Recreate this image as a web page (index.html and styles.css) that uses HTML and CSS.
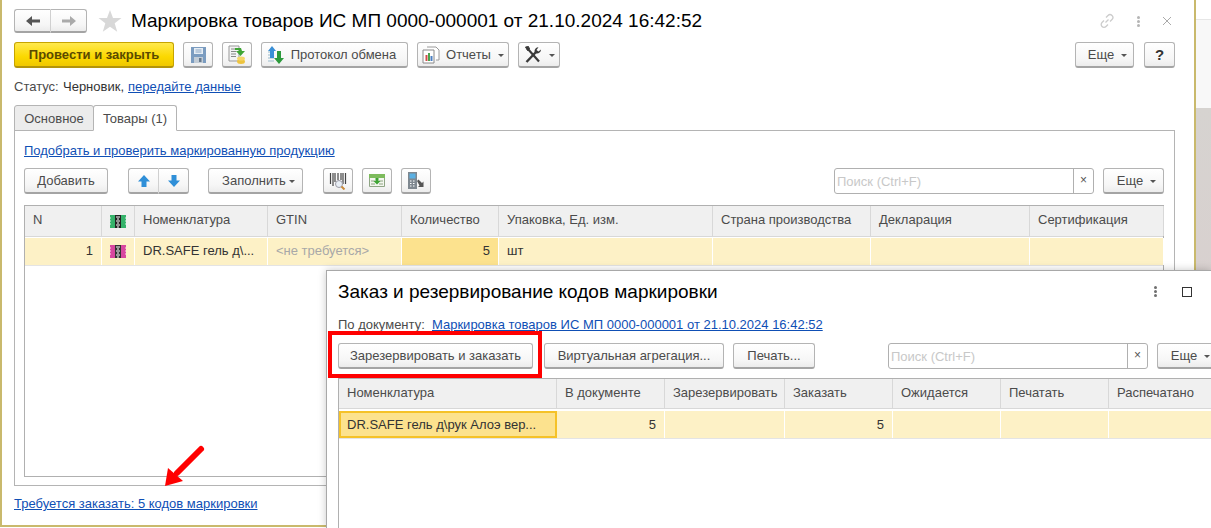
FILE: index.html
```html
<!DOCTYPE html>
<html lang="ru">
<head>
<meta charset="UTF-8">
<title>Маркировка товаров</title>
<link rel="stylesheet" href="styles.css">
</head>
<body>

<div class="backdrop">
<div class="backdropTop"></div>
<div class="backdropGrey"></div>
</div>

<main class="docWindow">

<header class="titleRow">
<div class="btnGroup navGroup">
<button class="btn navBtn"><svg width="16" height="12" viewBox="0 0 16 12"><path d="M1 6l6-5v3.500h8v3H7V11z" fill="#555"/></svg></button>
<button class="btn navBtn"><svg width="16" height="12" viewBox="0 0 16 12"><path d="M15 6L9 1v3.500H1v3h8V11z" fill="#aaa"/></svg></button>
</div>
<svg class="star" width="24" height="24" viewBox="0 0 24 24"><path d="M12 1l3 8h8.500l-6.800 5.300 2.500 8.500L12 17.800 4.800 22.800l2.500-8.500L.5 9H9z" fill="#d8d8d8"/></svg>
<h1 class="docTitle">Маркировка товаров ИС МП 0000-000001 от 21.10.2024 16:42:52</h1>
<div class="winIcons">
<svg width="16" height="16" viewBox="0 0 16 16" fill="none" stroke="#ccc" stroke-width="1.300"><path d="M6.500 9.500l3-3M7 4.500l2-2a2.800 2.800 0 0 1 4 4l-2 2M9 11.500l-2 2a2.800 2.800 0 0 1-4-4l2-2"/></svg>
<span class="dots dotsPale"><i></i><i></i><i></i></span>
<svg width="10" height="10" viewBox="0 0 10 10" stroke="#aaa" stroke-width="1"><path d="M1 1l8 8M9 1l-8 8"/></svg>
</div>
</header>

<div class="toolbar mainBar">
<button class="btn yellowBtn">Провести и закрыть</button>
<button class="btn iconBtn saveBtn"><svg width="15" height="16" viewBox="0 0 15 16"><path d="M0 0h15v16H0z" fill="#7b9cc0"/><path d="M3 1h9v6H3z" fill="#e6edf4"/><path d="M4.500 3h6M4.500 5h6" stroke="#8aa6c4"/><path d="M3 10h9v6H3z" fill="#c2ccd6"/><path d="M8 11h2.500v4H8z" fill="#67798c"/></svg></button>
<button class="btn iconBtn postBtn"><svg width="20" height="20" viewBox="0 0 20 20"><path d="M2 1h10v15H2z" fill="#f4f4f4" stroke="#999"/><path d="M4 4h5M4 6.500h5M4 9h5M4 11.500h5" stroke="#888"/><ellipse cx="14" cy="16.500" rx="4" ry="2.500" fill="#edc33e"/><ellipse cx="14" cy="13.500" rx="4" ry="2" fill="#f3d668"/><path d="M8 3h6l1 3h3l-4.500 5L9 6h3l-.5-1H8z" fill="#3fa535"/></svg></button>
<button class="btn textIconBtn protocolBtn"><svg width="18" height="18" viewBox="0 0 18 18"><path d="M1 6h6M1 9h6M1 12h6M1 15h6" stroke="#9bc"/><path d="M5 0l4 5H7v7H3V5H1z" fill="#3a8fd6"/><path d="M12 18l5-6h-3V5h-4v7H7z" fill="#2c9a3c"/></svg>Протокол обмена</button>
<button class="btn textIconBtn reportsBtn"><svg width="18" height="18" viewBox="0 0 18 18"><path d="M5 1h9l3 3v10h-3" fill="#fff" stroke="#9a9a9a"/><path d="M1 4h11v13H1z" fill="#fff" stroke="#8a8a8a"/><path d="M3.500 9h2v6h-2z" fill="#d24b4b"/><path d="M6 7h2v8H6z" fill="#4ba34b"/><path d="M8.500 10h2v5h-2z" fill="#4b7fc2"/></svg>Отчеты<i class="caret"></i></button>
<button class="btn textIconBtn toolsBtn"><svg width="18" height="18" viewBox="0 0 18 18" fill="none" stroke="#3a3a3a"><path d="M3.500 2.500L15 15.500" stroke-width="2.200"/><path d="M1.500 1l3-.5 1 2.500-2 1.500z" fill="#3a3a3a"/><path d="M2.500 16L12 6" stroke-width="2.400"/><path d="M17 3.500l-2.500 2-2-1.500 2-2.800A4 4 0 0 0 10.500 5.500l1.800 2A4 4 0 0 0 17 3.500z" fill="#3a3a3a" stroke="none"/></svg><i class="caret"></i></button>
<div class="spacer"></div>
<button class="btn moreBtn">Еще<i class="caret"></i></button>
<button class="btn helpBtn">?</button>
</div>

<div class="statusRow">
<span class="statusLabel">Статус:</span>
<span class="statusValue">Черновик,</span>
<a class="link">передайте данные</a>
</div>

<div class="tabs">
<div class="tab">Основное</div>
<div class="tab tabActive">Товары (1)</div>
</div>

<section class="tabPanel">
<a class="link pickLink">Подобрать и проверить маркированную продукцию</a>

<div class="toolbar goodsBar">
<button class="btn addBtn">Добавить</button>
<div class="btnGroup moveGroup">
<button class="btn moveBtn"><svg width="14" height="14" viewBox="0 0 14 14"><path d="M7 1l6 6.500H9.500V13h-5V7.500H1z" fill="#2f8fd8"/></svg></button>
<button class="btn moveBtn"><svg width="14" height="14" viewBox="0 0 14 14"><path d="M7 13l6-6.500H9.500V1h-5v5.500H1z" fill="#2f8fd8"/></svg></button>
</div>
<button class="btn fillBtn">Заполнить<i class="caret"></i></button>
<button class="btn iconBtn barBtn"><svg width="18" height="18" viewBox="0 0 18 18"><path d="M1.500 1v11M4 1v13M6 1v9M9 1v7M12 1v7M14 1v11M16.500 1v11" stroke="#444" stroke-width="1.200"/><circle cx="10" cy="12" r="3.500" fill="#e8eef5" stroke="#9a9aa5"/><path d="M12.500 14.500l3 3" stroke="#c98a3a" stroke-width="2"/></svg></button>
<button class="btn iconBtn loadBtn"><svg width="16" height="13" viewBox="0 0 16 13"><path d="M.5.500h15v12H.5z" fill="#f3f6ee" stroke="#8fa585"/><path d="M0 0h16v4H0z" fill="#7dbb5c"/><path d="M2 7h4M2 10h4M10 7h4M10 10h4" stroke="#8fa585"/><path d="M6.500 4h3v3h2L8 10.500 4.500 7h2z" fill="#3fa535"/></svg></button>
<button class="btn iconBtn scanBtn"><svg width="18" height="20" viewBox="0 0 18 20"><path d="M1 1h9v17H1z" fill="#7f8890"/><path d="M2.500 2.500h6v5h-6z" fill="#5ab0e3"/><path d="M3 10h1.500M6 10h1.500M3 12.500h1.500M6 12.500h1.500M3 15h1.500M6 15h1.500" stroke="#fff"/><path d="M10 10l1.500-1.500 3.500 3.500 1.500-1.500V16h-5.500l1.500-1.500z" fill="#555"/></svg></button>
<div class="spacer"></div>
<div class="searchBox goodsSearch"><span class="searchText">Поиск (Ctrl+F)</span><span class="searchClear">×</span></div>
<button class="btn moreBtn goodsMore">Еще<i class="caret"></i></button>
</div>

<div class="gridTable goodsTable">
<div class="gridRow headRow">
<div class="cell" style="width:77px">N</div>
<div class="cell iconCell" style="width:33px"><svg class="mark" width="16" height="13" viewBox="0 0 16 13"><rect width="16" height="13" fill="#35b26a"/><rect x="5" width="6" height="13" fill="#222"/><path d="M6 2h4M6 6h4M6 10h4M7 4h2M7 8h2M7 12h2" stroke="#fff"/><path d="M0 3h1M0 6h1M0 9h1M15 3h1M15 6h1M15 9h1" stroke="#d8f0e0"/></svg></div>
<div class="cell" style="width:133px">Номенклатура</div>
<div class="cell" style="width:134px">GTIN</div>
<div class="cell" style="width:97px">Количество</div>
<div class="cell" style="width:214px">Упаковка, Ед. изм.</div>
<div class="cell" style="width:158px">Страна производства</div>
<div class="cell" style="width:159px">Декларация</div>
<div class="cell" style="width:134px">Сертификация</div>
</div>
<div class="gridRow bodyRow">
<div class="cell numCell" style="width:77px">1</div>
<div class="cell iconCell" style="width:33px"><svg class="mark" width="16" height="13" viewBox="0 0 16 13"><rect width="16" height="13" fill="#d8479f"/><rect x="5" width="6" height="13" fill="#333"/><path d="M6 2h4M6 6h4M6 10h4M7 4h2M7 8h2M7 12h2" stroke="#fff"/><path d="M0 3h1M0 6h1M0 9h1M15 3h1M15 6h1M15 9h1" stroke="#fbdcef"/></svg></div>
<div class="cell" style="width:133px">DR.SAFE гель д\...</div>
<div class="cell paleText" style="width:134px">&lt;не требуется&gt;</div>
<div class="cell numCell activeCell" style="width:97px">5</div>
<div class="cell" style="width:214px">шт</div>
<div class="cell" style="width:158px"></div>
<div class="cell" style="width:159px"></div>
<div class="cell" style="width:134px"></div>
</div>
</div>
</section>

<a class="link needLink">Требуется заказать: 5 кодов маркировки</a>
</main>

<section class="orderDialog">
<header class="dialogHead">
<h2 class="dialogTitle">Заказ и резервирование кодов маркировки</h2>
<span class="dots"><i></i><i></i><i></i></span>
<span class="maxIcon"></span>
</header>
<div class="byDoc"><span class="statusLabel">По документу:</span><a class="link">Маркировка товаров ИС МП 0000-000001 от 21.10.2024 16:42:52</a></div>
<div class="toolbar dialogBar">
<button class="btn reserveBtn">Зарезервировать и заказать</button>
<button class="btn aggBtn">Виртуальная агрегация...</button>
<button class="btn printBtn">Печать...</button>
<div class="searchBox dialogSearch"><span class="searchText">Поиск (Ctrl+F)</span><span class="searchClear">×</span></div>
<button class="btn dialogMore">Еще<i class="caret"></i></button>
</div>
<div class="gridTable orderTable">
<div class="gridRow headRow orderHead">
<div class="cell" style="width:218px">Номенклатура</div>
<div class="cell" style="width:108px">В документе</div>
<div class="cell" style="width:120px">Зарезервировать</div>
<div class="cell" style="width:108px">Заказать</div>
<div class="cell" style="width:108px">Ожидается</div>
<div class="cell" style="width:108px">Печатать</div>
<div class="cell" style="width:103px">Распечатано</div>
</div>
<div class="gridRow bodyRow orderRow">
<div class="cell selCell" style="width:218px">DR.SAFE гель д\рук Алоэ вер...</div>
<div class="cell numCell" style="width:108px">5</div>
<div class="cell" style="width:120px"></div>
<div class="cell numCell" style="width:108px">5</div>
<div class="cell" style="width:108px"></div>
<div class="cell" style="width:108px"></div>
<div class="cell" style="width:103px"></div>
</div>
</div>
</section>

<div class="redFrame"></div>
<svg class="redArrow" width="48" height="50" viewBox="0 0 48 50"><path d="M39 8L15 32" stroke="#f00" stroke-width="6" stroke-linecap="round"/><path d="M3 45L6 27 21 40z" fill="#f00"/></svg>

</body>
</html>
```

FILE: styles.css
```css
*,*:before,*:after{
margin: 0;
padding: 0;
box-sizing: border-box;
}

html,body{
height: 100%;
}

body{
position: relative;
width: 1211px;
height: 528px;
overflow: hidden;
background: #fff;
font-family: "Liberation Sans", Arial, sans-serif;
font-size: 13px;
color: #4b4b4b;
}

.backdrop{
position: absolute;
left: 1196px;
top: 0;
width: 15px;
height: 100%;
}

.backdropTop{
height: 108px;
background: linear-gradient(#fff 19px, #e6e6e6 19px, #e6e6e6 20px, #f8f8f8 20px);
}

.backdropGrey{
height: 420px;
background: linear-gradient(#d6d3d0, #d9d0cf 50%, #d4d0cd);
}

.docWindow{
position: relative;
display: flex;
flex-direction: column;
width: 1196px;
height: 527px;
padding: 9px 19px 0 12px;
background: #fff;
border-left: 2px solid #c9b96c;
border-right: 2px solid #c9b96c;
border-bottom: 2px solid #c9b96c;
}

.titleRow{
display: flex;
align-items: center;
height: 24px;
}

.navGroup{
width: 73px;
height: 24px;
}

.star{
margin-left: 11px;
}

.docTitle{
margin-left: 9px;
font-size: 19px;
font-weight: normal;
color: #000;
white-space: nowrap;
}

.winIcons{
display: flex;
align-items: center;
gap: 22px;
margin-left: auto;
margin-right: 3px;
}

.dots{
display: inline-flex;
flex-direction: column;
gap: 1px;
}

.dots i{
width: 3px;
height: 3px;
border-radius: 50%;
background: #6f6f6f;
}

.dotsPale i{
background: #b5b5b5;
}

.toolbar{
display: flex;
align-items: center;
}

.spacer{
flex: 1;
}

.btn{
flex: none;
display: flex;
align-items: center;
justify-content: center;
height: 26px;
background: linear-gradient(#fff, #f6f6f6 70%, #ececec);
border: 1px solid #b4b4b4;
border-bottom: 2px solid #a4a4a4;
border-radius: 3px;
font-family: inherit;
font-size: 13px;
color: #4b4b4b;
white-space: nowrap;
}

.btnGroup{
display: flex;
}

.btnGroup .btn{
flex: 1;
height: auto;
}

.btnGroup .btn:first-child{
border-radius: 3px 0 0 3px;
border-right: 1px solid #d0d0d0;
}

.btnGroup .btn:last-child{
border-radius: 0 3px 3px 0;
border-left: none;
}

.caret{
display: inline-block;
width: 0;
height: 0;
margin-left: 7px;
margin-top: 2px;
border: 3px solid transparent;
border-top: 3px solid #555;
border-bottom: none;
}

.mainBar{
margin-top: 9px;
height: 26px;
}

.yellowBtn{
width: 160px;
background: linear-gradient(#ffe94d, #fbd800 60%, #f0c800);
border-color: #c6a400;
border-bottom-color: #b3940a;
font-weight: bold;
color: #5a4a00;
}

.iconBtn{
width: 30px;
}

.saveBtn{
margin-left: 9px;
}

.postBtn{
margin-left: 9px;
}

.textIconBtn svg{
margin-right: 6px;
}

.protocolBtn{
width: 147px;
margin-left: 9px;
padding-right: 6px;
}

.reportsBtn{
width: 92px;
margin-left: 9px;
}

.toolsBtn{
width: 42px;
margin-left: 9px;
}

.toolsBtn svg{
margin-right: 0;
}

.moreBtn{
width: 59px;
padding-left: 6px;
}

.helpBtn{
width: 31px;
margin-left: 10px;
font-size: 15px;
font-weight: bold;
color: #333;
}

.statusRow{
display: flex;
margin-top: 12px;
height: 14px;
line-height: 14px;
white-space: nowrap;
}

.statusLabel{
width: 49px;
}

.statusValue{
width: 65px;
color: #333;
}

.link{
color: #0f4fb5;
text-decoration: underline;
white-space: nowrap;
}

.tabs{
display: flex;
margin-top: 11px;
height: 26px;
}

.tab{
width: 80px;
height: 26px;
line-height: 25px;
text-align: center;
background: #ececec;
border: 1px solid #b4b4b4;
border-radius: 3px 3px 0 0;
}

.tabActive{
position: relative;
width: 84px;
margin-left: -1px;
background: #fff;
border-bottom: 1px solid #fff;
z-index: 1;
}

.tabPanel{
display: flex;
flex-direction: column;
height: 356px;
margin-top: -1px;
padding: 13px 10px 0 9px;
border: 1px solid #b4b4b4;
}

.pickLink{
line-height: 14px;
}

.goodsBar{
margin-top: 10px;
height: 26px;
}

.addBtn{
width: 84px;
}

.moveGroup{
width: 61px;
height: 26px;
margin-left: 20px;
}

.fillBtn{
width: 95px;
margin-left: 19px;
padding-left: 6px;
}

.fillBtn .caret{
margin-left: 3px;
}

.barBtn{
margin-left: 20px;
}

.loadBtn,.scanBtn{
margin-left: 9px;
}

.searchBox{
flex: none;
display: flex;
align-items: center;
height: 26px;
background: #fff;
border: 1px solid #b0b0b0;
border-radius: 3px;
}

.searchText{
flex: 1;
padding-left: 2px;
color: #c8c8c8;
}

.searchClear{
width: 20px;
height: 100%;
line-height: 22px;
text-align: center;
border-left: 1px solid #b0b0b0;
font-size: 12px;
color: #555;
}

.goodsSearch{
width: 260px;
}

.goodsMore{
width: 61px;
margin-left: 9px;
}

.gridTable{
border: 1px solid #b0b0b0;
}

.goodsTable{
height: 272px;
margin-top: 11px;
}

.gridRow{
display: flex;
}

.cell{
flex: none;
padding: 0 8px;
overflow: hidden;
white-space: nowrap;
border-right: 1px solid #fff;
}

.headRow{
height: 31px;
line-height: 28px;
background: #f0f0f0;
border-bottom: 1px solid #d8d8d8;
}

.headRow .cell{
border-right: 1px solid #d8d8d8;
}

.bodyRow{
height: 28px;
line-height: 25px;
margin-top: 1px;
background: #fdf1c6;
border-bottom: 1px solid #e4e4e4;
color: #333;
}

.iconCell{
display: flex;
align-items: center;
justify-content: center;
padding: 0;
}

.numCell{
text-align: right;
}

.paleText{
color: #a8a8a8;
}

.activeCell{
background: #fce28e;
}

.needLink{
margin-top: 11px;
line-height: 14px;
}

.orderDialog{
position: absolute;
left: 326px;
top: 270px;
display: flex;
flex-direction: column;
width: 885px;
height: 258px;
overflow: hidden;
background: #fff;
border-top: 1px solid #a8a8a8;
border-left: 1px solid #a8a8a8;
box-shadow: 0 0 8px rgba(0,0,0,.22);
}

.dialogHead{
flex: none;
display: flex;
align-items: center;
height: 41px;
padding-left: 11px;
}

.dialogTitle{
width: 816px;
font-size: 19px;
font-weight: normal;
color: #000;
white-space: nowrap;
}

.maxIcon{
width: 10px;
height: 10px;
margin-left: 25px;
border: 1px solid #333;
}

.byDoc{
flex: none;
display: flex;
padding-left: 11px;
margin-top: 6px;
line-height: 14px;
white-space: nowrap;
}

.byDoc .statusLabel{
width: 94px;
}

.dialogBar{
flex: none;
margin-top: 11px;
padding-left: 11px;
height: 26px;
}

.reserveBtn{
width: 195px;
}

.aggBtn{
width: 180px;
margin-left: 11px;
}

.printBtn{
width: 82px;
margin-left: 9px;
}

.dialogSearch{
width: 260px;
margin-left: 73px;
}

.dialogMore{
width: 61px;
margin-left: 9px;
padding-left: 6px;
}

.orderTable{
flex: 1;
margin: 9px 0 0 11px;
border-right: none;
border-bottom: none;
overflow: hidden;
}

.orderHead{
height: 30px;
}

.orderRow{
height: 28px;
line-height: 27px;
margin-top: 2px;
}

.selCell{
background: #fce28e;
outline: 2px solid #f5c228;
outline-offset: -2px;
}

.redFrame{
position: absolute;
left: 328px;
top: 331px;
width: 214px;
height: 47px;
border: 4px solid #f00;
}

.redArrow{
position: absolute;
left: 162px;
top: 441px;
}
```
